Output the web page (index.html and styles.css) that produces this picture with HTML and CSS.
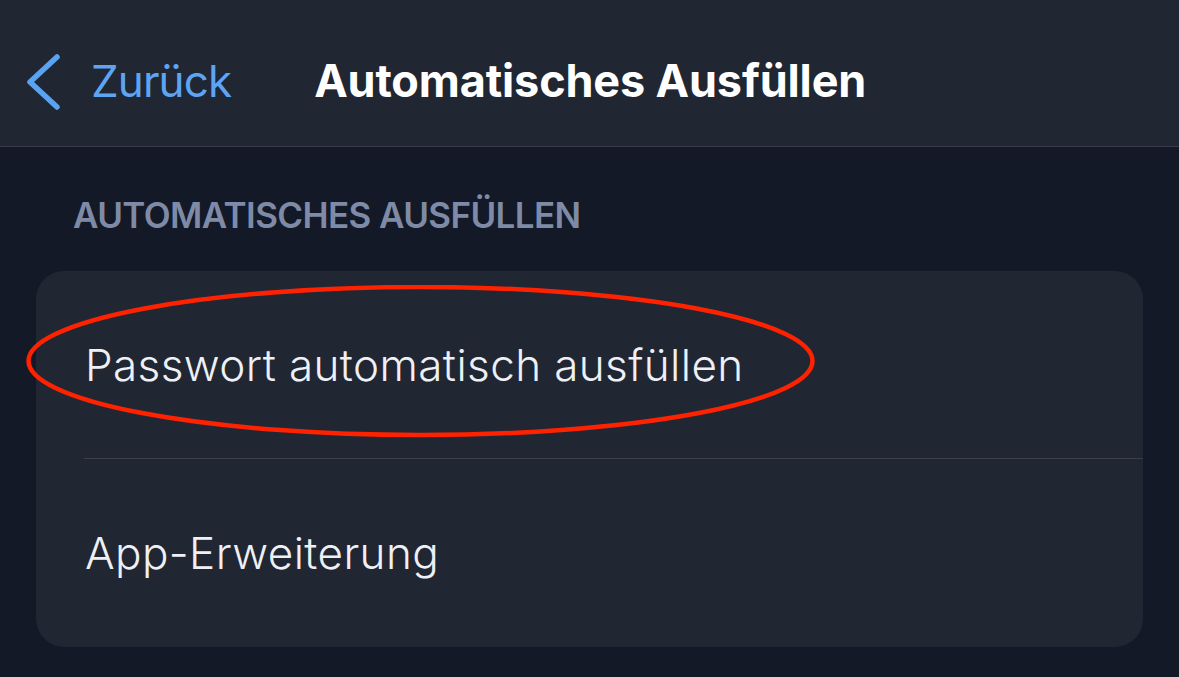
FILE: index.html
```html
<!DOCTYPE html>
<html lang="de">
<head>
<meta charset="utf-8">
<title>Automatisches Ausfüllen</title>
<link rel="stylesheet" href="styles.css">
</head>
<body>
<header class="navbar">
  <a class="back">
    <svg class="chevron" width="36" height="58" viewBox="0 0 36 58" aria-hidden="true">
      <path d="M31 4 L4 29 L31 54" fill="none" stroke="#5aa2f2" stroke-width="5.5" stroke-linecap="round" stroke-linejoin="round"/>
    </svg>
    <span class="back-label">Zurück</span>
  </a>
  <h1 class="title">Automatisches Ausfüllen</h1>
</header>
<main class="content">
  <h2 class="section-title">AUTOMATISCHES AUSFÜLLEN</h2>
  <section class="card">
    <div class="row row-first">
      <span class="row-label">Passwort automatisch ausfüllen</span>
    </div>
    <div class="row">
      <span class="row-label">App-Erweiterung</span>
    </div>
    <svg class="highlight" width="793" height="156" viewBox="0 0 793 156" aria-hidden="true">
      <ellipse cx="396.5" cy="76" rx="392" ry="74" fill="none" stroke="#ff2200" stroke-width="4.5"/>
    </svg>
  </section>
</main>
</body>
</html>
```
FILE: styles.css
```css
* { box-sizing: border-box; }
html, body {
  margin: 0;
  padding: 0;
}
body {
  width: 1179px;
  height: 677px;
  overflow: hidden;
  background: #131926;
  font-family: "Inter", "Liberation Sans", sans-serif;
  color: #eef0f5;
}
.navbar {
  height: 147px;
  background: #212633;
  border-bottom: 1px solid #363b47;
  display: flex;
  align-items: center;
  padding-left: 26px;
  padding-top: 15px;
}
.back {
  display: flex;
  align-items: center;
  color: #5da4f2;
  text-decoration: none;
}
.chevron {
  display: block;
  margin-top: 2px;
}
.back-label {
  margin-left: 29px;
  font-size: 44px;
  font-weight: 400;
  letter-spacing: -0.9px;
  line-height: 1;
}
.title {
  margin: 0 0 0 83px;
  font-size: 45px;
  font-weight: 700;
  color: #ffffff;
  letter-spacing: -0.15px;
  line-height: 1;
}
.content {
  padding: 0 36px;
}
.section-title {
  margin: 0;
  padding: 48px 0 0 37px;
  height: 124px;
  font-size: 35px;
  font-weight: 600;
  color: #7f8ba6;
  line-height: 40px;
  letter-spacing: -0.6px;
}
.card {
  position: relative;
  background: #212633;
  border-radius: 28px;
  height: 376px;
}
.row {
  height: 188px;
  display: flex;
  align-items: center;
  padding-left: 49px;
}
.row-first {
  position: relative;
}
.row-first::after {
  content: "";
  position: absolute;
  left: 48px;
  right: 0;
  bottom: 0;
  height: 1px;
  background: #3a3f4a;
}
.row-label {
  font-size: 44px;
  font-weight: 300;
  line-height: 1;
  letter-spacing: 0.4px;
  color: #eef0f5;
}
.highlight {
  position: absolute;
  left: -12px;
  top: 14px;
}
```
